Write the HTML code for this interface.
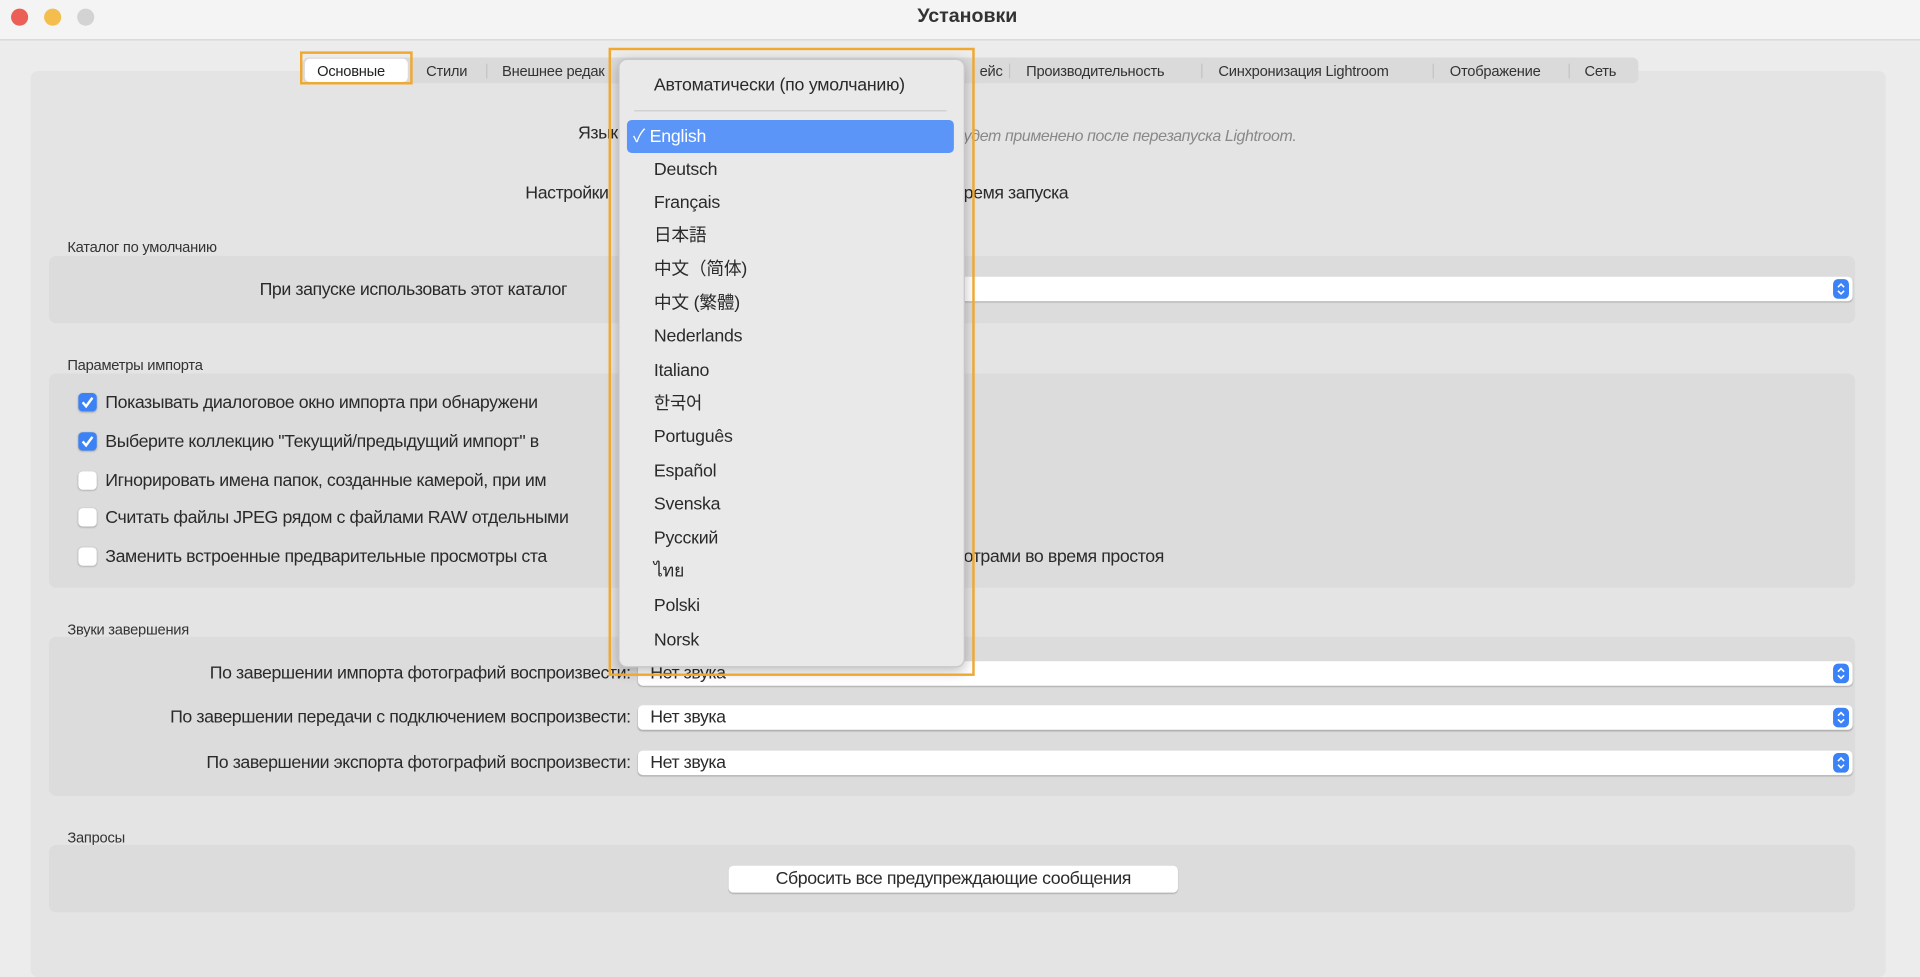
<!DOCTYPE html>
<html><head><meta charset="utf-8"><style>
html,body{margin:0;padding:0;width:1920px;height:959px;overflow:hidden;background:#ececec}
#w{position:absolute;left:0;top:0;width:1568px;height:783px;transform:scale(1.22449);transform-origin:0 0;font-family:"Liberation Sans","Noto Sans CJK JP",sans-serif;color:#2a2a2a;background:#ececec}
.a{position:absolute;white-space:nowrap;line-height:17px}
.t{font-size:14.5px;letter-spacing:-0.35px}
.s{font-size:12px;letter-spacing:-0.2px;color:#333}
.grp{position:absolute;left:40px;width:1475px;background:#dcdcdc;border-radius:6px}
.sel{position:absolute;left:521px;width:992px;height:20px;background:#fff;border-radius:4px;box-shadow:0 1px 1px rgba(0,0,0,.2)}
.sel span{position:absolute;left:10px;top:2px;font-size:14.5px;letter-spacing:-0.35px;line-height:17px}
.arr{position:absolute;right:3px;top:2px;width:13px;height:16px;background:#3b82f6;border-radius:4px}
.arr svg{position:absolute;left:3px;top:2px}
.cb{position:absolute;left:64px;width:15px;height:15px;border-radius:3.5px;background:#fff;box-shadow:0 0.5px 1.5px rgba(0,0,0,.25)}
.cb.on{background:#3b82f6}
.r{text-align:right}
.mi{position:absolute;left:534px;font-size:14.5px;letter-spacing:-0.2px;color:#2a2a2a;line-height:17px;height:17px;white-space:nowrap}
</style></head><body><div id="w">
<div class="a" style="left:0;top:0;width:1568px;height:32px;background:#f4f4f4;border-bottom:1px solid #d4d4d4"></div>
<div class="a" style="left:9px;top:7px;width:14px;height:14px;border-radius:50%;background:#ec5f57"></div>
<div class="a" style="left:36px;top:7px;width:14px;height:14px;border-radius:50%;background:#f4be4f"></div>
<div class="a" style="left:63px;top:7px;width:14px;height:14px;border-radius:50%;background:#d3d3d3"></div>
<div class="a" style="left:0;width:1580px;top:5px;text-align:center;font-size:16px;font-weight:bold;color:#333">Установки</div>

<div class="a" style="left:25px;top:58px;width:1515px;height:740px;background:#e4e4e4;border-radius:6px"></div>

<div class="a" style="left:247px;top:47px;width:1091px;height:21px;background:#dadada;border-radius:5px"></div>
<div class="a" style="left:249px;top:48px;width:84px;height:19px;background:#fff;border-radius:4px"></div>
<div class="a s" style="left:259px;top:50px;color:#222">Основные</div>
<div class="a s" style="left:348px;top:50px">Стили</div>
<div class="a" style="left:397px;top:52px;width:1px;height:12px;background:#c4c4c4"></div>
<div class="a s" style="left:410px;top:50px">Внешнее редак</div>
<div class="a s" style="left:800px;top:50px">ейс</div>
<div class="a" style="left:824px;top:52px;width:1px;height:12px;background:#c4c4c4"></div>
<div class="a s" style="left:838px;top:50px">Производительность</div>
<div class="a" style="left:981px;top:52px;width:1px;height:12px;background:#c4c4c4"></div>
<div class="a s" style="left:995px;top:50px">Синхронизация Lightroom</div>
<div class="a" style="left:1170px;top:52px;width:1px;height:12px;background:#c4c4c4"></div>
<div class="a s" style="left:1184px;top:50px">Отображение</div>
<div class="a" style="left:1281px;top:52px;width:1px;height:12px;background:#c4c4c4"></div>
<div class="a s" style="left:1294px;top:50px">Сеть</div>
<div class="a" style="left:245px;top:42px;width:88px;height:23px;border:2px solid #f0a830"></div>

<div class="a t" style="left:472px;top:101px">Язык</div>
<div class="a" style="left:787px;top:102px;font-size:13px;font-style:italic;color:#888;letter-spacing:-0.3px">удет применено после перезапуска Lightroom.</div>
<div class="a t" style="left:429px;top:150px">Настройки</div>
<div class="a t" style="left:787px;top:150px">ремя запуска</div>

<div class="a s" style="left:55px;top:194px">Каталог по умолчанию</div>
<div class="grp" style="top:209px;height:55px"></div>
<div class="a t" style="left:212px;top:229px">При запуске использовать этот каталог</div>
<div class="sel" style="top:226px"><div class="arr"><svg width="7" height="12" viewBox="0 0 7 12"><path d="M1 4.5L3.5 2 6 4.5M1 7.5L3.5 10 6 7.5" stroke="#fff" stroke-width="1.3" fill="none"/></svg></div></div>

<div class="a s" style="left:55px;top:290px">Параметры импорта</div>
<div class="grp" style="top:305px;height:175px"></div>
<div class="cb on" style="top:321px"><svg width="15" height="15" viewBox="0 0 15 15"><path d="M3.5 7.5L6.3 10.8 11.5 3.8" stroke="#fff" stroke-width="2" fill="none"/></svg></div>
<div class="a t" style="left:86px;top:321px">Показывать диалоговое окно импорта при обнаружени</div>
<div class="cb on" style="top:353px"><svg width="15" height="15" viewBox="0 0 15 15"><path d="M3.5 7.5L6.3 10.8 11.5 3.8" stroke="#fff" stroke-width="2" fill="none"/></svg></div>
<div class="a t" style="left:86px;top:353px">Выберите коллекцию "Текущий/предыдущий импорт" в</div>
<div class="cb" style="top:385px"></div>
<div class="a t" style="left:86px;top:385px">Игнорировать имена папок, созданные камерой, при им</div>
<div class="cb" style="top:415px"></div>
<div class="a t" style="left:86px;top:415px">Считать файлы JPEG рядом с файлами RAW отдельными</div>
<div class="cb" style="top:447px"></div>
<div class="a t" style="left:86px;top:447px">Заменить встроенные предварительные просмотры ста</div>
<div class="a t" style="left:787px;top:447px">отрами во время простоя</div>

<div class="a s" style="left:55px;top:506px">Звуки завершения</div>
<div class="grp" style="top:520px;height:130px"></div>
<div class="a t r" style="right:1053px;top:542px">По завершении импорта фотографий воспроизвести:</div>
<div class="sel" style="top:540px"><span>Нет звука</span><div class="arr"><svg width="7" height="12" viewBox="0 0 7 12"><path d="M1 4.5L3.5 2 6 4.5M1 7.5L3.5 10 6 7.5" stroke="#fff" stroke-width="1.3" fill="none"/></svg></div></div>
<div class="a t r" style="right:1053px;top:578px">По завершении передачи с подключением воспроизвести:</div>
<div class="sel" style="top:576px"><span>Нет звука</span><div class="arr"><svg width="7" height="12" viewBox="0 0 7 12"><path d="M1 4.5L3.5 2 6 4.5M1 7.5L3.5 10 6 7.5" stroke="#fff" stroke-width="1.3" fill="none"/></svg></div></div>
<div class="a t r" style="right:1053px;top:615px">По завершении экспорта фотографий воспроизвести:</div>
<div class="sel" style="top:613px"><span>Нет звука</span><div class="arr"><svg width="7" height="12" viewBox="0 0 7 12"><path d="M1 4.5L3.5 2 6 4.5M1 7.5L3.5 10 6 7.5" stroke="#fff" stroke-width="1.3" fill="none"/></svg></div></div>

<div class="a s" style="left:55px;top:676px">Запросы</div>
<div class="grp" style="top:690px;height:55px"></div>
<div class="a" style="left:595px;top:707px;width:367px;height:22px;background:#fff;border-radius:4px;box-shadow:0 1px 1px rgba(0,0,0,.2)"></div>
<div class="a t" style="left:595px;width:367px;top:710px;text-align:center">Сбросить все предупреждающие сообщения</div>

<div class="a" style="left:505px;top:48px;width:281px;height:495px;background:#e9e9e9;border-radius:7px;box-shadow:0 3px 10px rgba(0,0,0,.25);border:0.5px solid #c8c8c8"></div>
<div class="mi" style="top:62px">Автоматически (по умолчанию)</div>
<div class="a" style="left:518px;top:90px;width:255px;height:1px;background:#cdcdcd"></div>
<div class="a" style="left:512px;top:98px;width:267px;height:27px;background:#5b95f7;border-radius:4px"></div>
<div class="mi" style="left:517px;top:104px;color:#fff">✓ English</div>
<div class="mi" style="top:131px">Deutsch</div>
<div class="mi" style="top:158px">Français</div>
<div class="mi" style="top:185px">日本語</div>
<div class="mi" style="top:212px">中文（简体)</div>
<div class="mi" style="top:240px">中文 (繁體)</div>
<div class="mi" style="top:267px">Nederlands</div>
<div class="mi" style="top:295px">Italiano</div>
<div class="mi" style="top:322px">한국어</div>
<div class="mi" style="top:349px">Português</div>
<div class="mi" style="top:377px">Español</div>
<div class="mi" style="top:404px">Svenska</div>
<div class="mi" style="top:432px">Русский</div>
<div class="mi" style="top:459px">ไทย</div>
<div class="mi" style="top:487px">Polski</div>
<div class="mi" style="top:515px">Norsk</div>
<div class="a" style="left:497px;top:39px;width:295px;height:509px;border:2px solid #f0a830"></div>
</div></body></html>
